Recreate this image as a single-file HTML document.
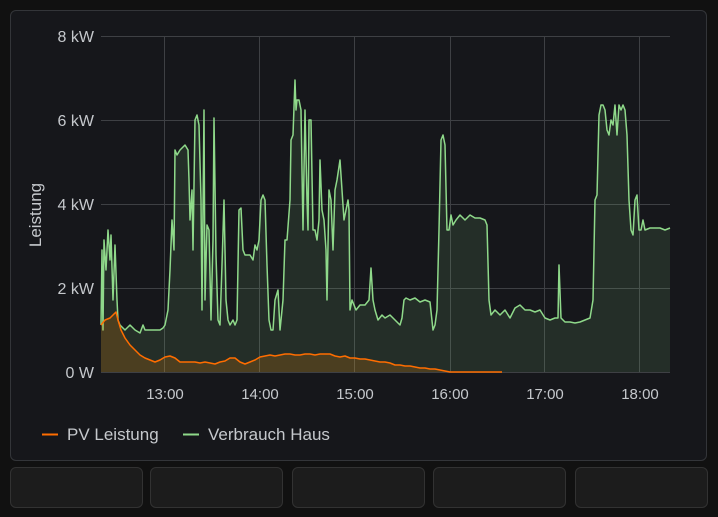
<!DOCTYPE html>
<html><head><meta charset="utf-8"><style>
html,body{margin:0;padding:0;background:#111111;width:718px;height:517px;overflow:hidden;font-family:"Liberation Sans",sans-serif;}
.card{position:absolute;left:10px;top:10px;width:695px;height:449px;background:#16171b;border:1px solid #333539;border-radius:6px;}
.btn{position:absolute;top:467px;height:39px;background:#1c1c1c;border:1px solid #323232;border-radius:6px;}
svg{position:absolute;left:0;top:0}
</style></head><body>
<div class="card"></div>
<div class="btn" style="left:10px;width:131px"></div>
<div class="btn" style="left:150px;width:131px"></div>
<div class="btn" style="left:292px;width:131px"></div>
<div class="btn" style="left:433px;width:131px"></div>
<div class="btn" style="left:575px;width:131px"></div>
<svg width="718" height="517" font-family="Liberation Sans, sans-serif">
<g stroke="#3e4044" stroke-width="1">
<line x1="101" y1="36.5" x2="670" y2="36.5"/><line x1="101" y1="120.5" x2="670" y2="120.5"/><line x1="101" y1="204.5" x2="670" y2="204.5"/><line x1="101" y1="288.5" x2="670" y2="288.5"/><line x1="101" y1="372.5" x2="670" y2="372.5"/>
<line x1="164.5" y1="36" x2="164.5" y2="372"/><line x1="259.5" y1="36" x2="259.5" y2="372"/><line x1="354.5" y1="36" x2="354.5" y2="372"/><line x1="450.5" y1="36" x2="450.5" y2="372"/><line x1="544.5" y1="36" x2="544.5" y2="372"/><line x1="639.5" y1="36" x2="639.5" y2="372"/>
</g>
<g fill="#c5c8cc" font-size="16" text-anchor="end">
<text x="94" y="42">8 kW</text><text x="94" y="126">6 kW</text><text x="94" y="210">4 kW</text><text x="94" y="294">2 kW</text><text x="94" y="378">0 W</text>
</g>
<g fill="#c5c8cc" font-size="15" text-anchor="middle">
<text x="165" y="399">13:00</text><text x="260" y="399">14:00</text><text x="355" y="399">15:00</text><text x="450" y="399">16:00</text><text x="545" y="399">17:00</text><text x="640" y="399">18:00</text>
</g>
<text transform="translate(41,215) rotate(-90)" fill="#c5c8cc" font-size="17" text-anchor="middle">Leistung</text>
<polygon fill="rgba(140,217,140,0.12)" stroke="none" points="101,372 101,325 102,250 103,330 104,240 106,270 108,230 110,260 111,235 113,300 115,245 117,300 118,320 120,325 125,330 130,325 135,330 140,333 143,325 145,330 150,330 155,330 160,330 163,328 165,325 168,310 170,270 172,220 174,250 175,150 177,155 180,150 185,145 188,150 189,180 190,220 192,190 193,250 195,120 197,115 199,125 201,200 202,310 204,110 205,300 207,225 209,230 211,320 213,240 214,118 216,255 218,320 220,325 222,265 224,200 226,300 228,320 230,325 233,320 235,325 237,320 239,210 241,208 243,250 245,255 250,255 253,260 255,245 257,250 259,240 261,200 263,195 265,200 267,265 269,320 271,330 273,330 275,300 278,290 280,330 283,300 285,240 287,240 290,200 291,140 293,135 295,80 296,110 297,100 299,100 301,110 303,230 305,110 307,200 308,230 309,120 311,120 313,230 315,230 317,240 319,220 320,160 322,210 324,220 326,250 327,300 329,190 331,200 333,250 335,190 337,180 340,160 342,190 344,220 346,210 348,200 349,210 350,310 352,300 354,305 356,310 360,305 365,305 369,300 371,268 373,300 375,310 378,320 382,315 385,318 390,315 395,320 400,325 402,318 404,300 406,298 410,300 415,298 420,302 425,300 430,302 433,330 435,325 437,310 439,230 441,140 443,135 445,145 447,230 449,230 451,215 453,225 456,220 460,215 465,220 470,215 475,218 480,218 485,220 487,225 489,300 491,315 495,310 500,315 505,310 510,318 515,308 520,305 525,310 530,310 535,312 540,310 545,318 550,320 555,318 558,318 559,265 561,318 565,322 570,322 575,323 580,322 585,320 590,318 593,300 595,200 597,195 599,115 601,105 603,105 605,110 607,130 609,135 611,120 613,125 615,105 617,135 619,105 621,110 623,105 625,110 627,135 629,200 631,230 633,235 635,200 637,195 639,230 641,230 643,220 645,230 650,228 655,228 660,228 665,230 670,228 670,372"/>
<polyline fill="none" stroke="#8fd98a" stroke-width="1.5" stroke-linejoin="round" points="101,325 102,250 103,330 104,240 106,270 108,230 110,260 111,235 113,300 115,245 117,300 118,320 120,325 125,330 130,325 135,330 140,333 143,325 145,330 150,330 155,330 160,330 163,328 165,325 168,310 170,270 172,220 174,250 175,150 177,155 180,150 185,145 188,150 189,180 190,220 192,190 193,250 195,120 197,115 199,125 201,200 202,310 204,110 205,300 207,225 209,230 211,320 213,240 214,118 216,255 218,320 220,325 222,265 224,200 226,300 228,320 230,325 233,320 235,325 237,320 239,210 241,208 243,250 245,255 250,255 253,260 255,245 257,250 259,240 261,200 263,195 265,200 267,265 269,320 271,330 273,330 275,300 278,290 280,330 283,300 285,240 287,240 290,200 291,140 293,135 295,80 296,110 297,100 299,100 301,110 303,230 305,110 307,200 308,230 309,120 311,120 313,230 315,230 317,240 319,220 320,160 322,210 324,220 326,250 327,300 329,190 331,200 333,250 335,190 337,180 340,160 342,190 344,220 346,210 348,200 349,210 350,310 352,300 354,305 356,310 360,305 365,305 369,300 371,268 373,300 375,310 378,320 382,315 385,318 390,315 395,320 400,325 402,318 404,300 406,298 410,300 415,298 420,302 425,300 430,302 433,330 435,325 437,310 439,230 441,140 443,135 445,145 447,230 449,230 451,215 453,225 456,220 460,215 465,220 470,215 475,218 480,218 485,220 487,225 489,300 491,315 495,310 500,315 505,310 510,318 515,308 520,305 525,310 530,310 535,312 540,310 545,318 550,320 555,318 558,318 559,265 561,318 565,322 570,322 575,323 580,322 585,320 590,318 593,300 595,200 597,195 599,115 601,105 603,105 605,110 607,130 609,135 611,120 613,125 615,105 617,135 619,105 621,110 623,105 625,110 627,135 629,200 631,230 633,235 635,200 637,195 639,230 641,230 643,220 645,230 650,228 655,228 660,228 665,230 670,228"/>
<polygon fill="rgba(255,140,0,0.18)" points="101,372 101,325 105,320 110,318 113,315 116,312 118,320 121,330 125,338 130,345 135,350 140,355 145,358 150,360 155,362 160,360 165,357 170,356 175,358 180,362 185,362 190,362 195,362 200,363 205,362 210,363 215,364 220,362 225,361 230,358 235,358 240,362 245,364 250,362 255,360 260,357 265,356 270,355 275,356 280,355 285,354 290,354 295,355 300,355 305,354 310,354 315,355 320,354 325,354 330,354 335,356 340,357 345,356 350,358 355,358 360,359 365,359 370,360 375,361 380,362 385,362 390,363 395,365 400,365 405,366 410,366 415,367 420,368 425,368 430,369 435,369 440,370 445,371 450,372"/>
<polyline fill="none" stroke="#ff6d00" stroke-width="1.5" stroke-linejoin="round" points="101,325 105,320 110,318 113,315 116,312 118,320 121,330 125,338 130,345 135,350 140,355 145,358 150,360 155,362 160,360 165,357 170,356 175,358 180,362 185,362 190,362 195,362 200,363 205,362 210,363 215,364 220,362 225,361 230,358 235,358 240,362 245,364 250,362 255,360 260,357 265,356 270,355 275,356 280,355 285,354 290,354 295,355 300,355 305,354 310,354 315,355 320,354 325,354 330,354 335,356 340,357 345,356 350,358 355,358 360,359 365,359 370,360 375,361 380,362 385,362 390,363 395,365 400,365 405,366 410,366 415,367 420,368 425,368 430,369 435,369 440,370 445,371 450,372 460,372 480,372 502,372"/>
<line x1="42" y1="434.5" x2="58" y2="434.5" stroke="#ff6d00" stroke-width="2"/>
<text x="67" y="440" fill="#c5c8cc" font-size="17">PV Leistung</text>
<line x1="183" y1="434.5" x2="199" y2="434.5" stroke="#8fd98a" stroke-width="2"/>
<text x="208" y="440" fill="#c5c8cc" font-size="17">Verbrauch Haus</text>
</svg>
</body></html>
